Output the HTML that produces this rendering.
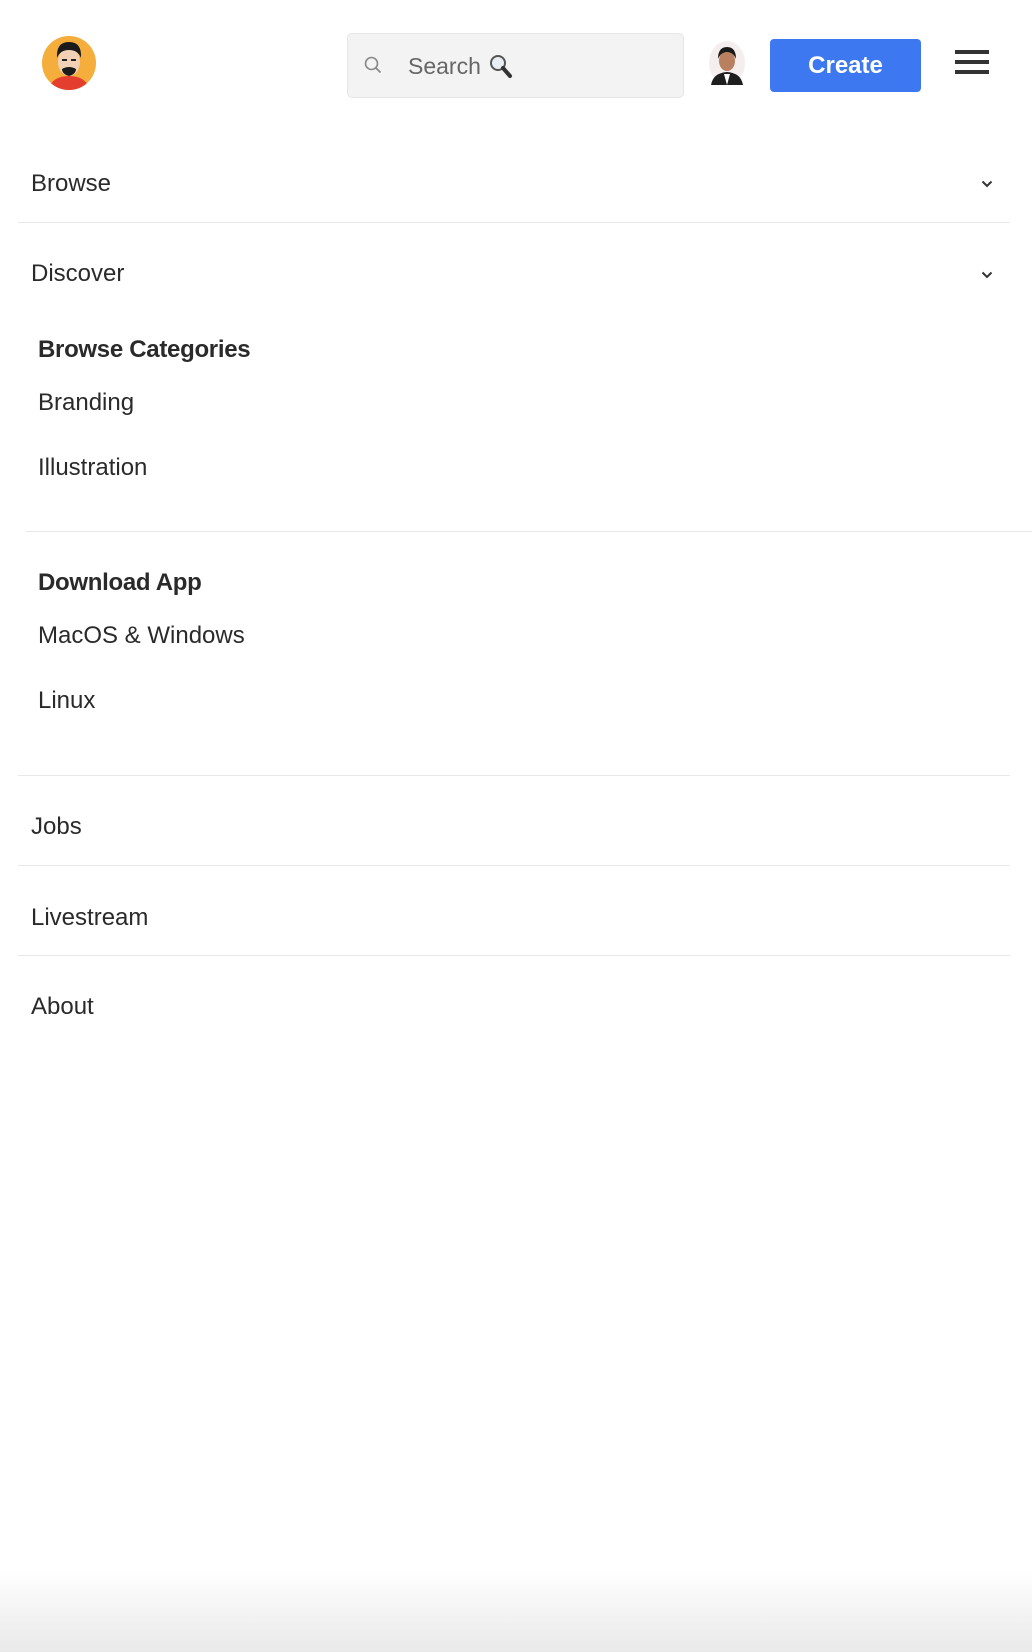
<!DOCTYPE html>
<html><head><meta charset="utf-8"><style>
*{margin:0;padding:0;box-sizing:border-box}
html,body{width:1032px;height:1652px;overflow:hidden;background:#fff}
body{position:relative;font-family:"Liberation Sans",sans-serif;color:#2a2a2a}
.t{position:absolute;font-size:24px;line-height:24px;white-space:nowrap}
.b{font-weight:bold;letter-spacing:-0.3px}
.hr{position:absolute;height:1px;background:#e8e8e8}
.chev{position:absolute;width:12px;height:8px}
</style></head><body>
<svg style="position:absolute;left:42px;top:36px" width="54" height="54" viewBox="0 0 54 54">
<defs><clipPath id="c1"><circle cx="27" cy="27" r="27"/></clipPath></defs>
<g clip-path="url(#c1)">
<rect width="54" height="54" fill="#f5ad3c"/>
<path d="M6 54 Q10 40 27 40 Q44 40 48 54Z" fill="#e33e2e"/>
<ellipse cx="27" cy="26" rx="11" ry="14" fill="#f1d2b6"/>
<path d="M15 22 Q14 6 27 6 Q40 6 39 22 Q36 14 27 14 Q18 14 15 22Z" fill="#1b1b1b"/>
<path d="M20 33 Q27 29 34 33 Q34 38 27 40 Q20 38 20 33Z" fill="#1b1b1b"/>
<rect x="20" y="23" width="5" height="2" fill="#222"/><rect x="29" y="23" width="5" height="2" fill="#222"/>
</g></svg>
<div style="position:absolute;left:347px;top:33px;width:337px;height:65px;background:#f3f3f3;border:1px solid #e6e6e6;border-radius:5px"></div>
<svg style="position:absolute;left:364px;top:56px" width="18" height="18" viewBox="0 0 18 18"><circle cx="7.5" cy="7.5" r="6" fill="none" stroke="#888" stroke-width="1.6"/><path d="M12 12 L16.5 16.5" stroke="#888" stroke-width="1.8"/></svg>
<div class="t" style="left:408px;top:54px;color:#666;font-size:23px">Search</div>
<svg style="position:absolute;left:489px;top:54px" width="24" height="26" viewBox="0 0 24 26"><circle cx="9" cy="9" r="7" fill="#e8eef3" stroke="#555" stroke-width="2"/><path d="M14 14 L21 22" stroke="#333" stroke-width="4" stroke-linecap="round"/></svg>
<svg style="position:absolute;left:708px;top:41px" width="38" height="44" viewBox="0 0 38 44">
<ellipse cx="19" cy="22" rx="18" ry="22" fill="#f5eeee"/>
<path d="M3 44 Q5 32 19 31 Q33 32 35 44Z" fill="#1e1e1e"/>
<path d="M16 33 L19 44 L22 33Z" fill="#fff"/>
<ellipse cx="19" cy="20" rx="8" ry="10" fill="#b98060"/>
<path d="M10 18 Q10 6 19 6 Q28 6 28 18 Q25 11 19 11 Q13 11 10 18Z" fill="#1a1a1a"/>
</svg>
<div style="position:absolute;left:770px;top:39px;width:151px;height:53px;background:#3e78f0;border-radius:4px;color:#fff;font-size:24px;font-weight:bold;text-align:center;line-height:53px">Create</div>
<div style="position:absolute;left:955px;top:50px;width:34px;height:4px;background:#333"></div>
<div style="position:absolute;left:955px;top:60px;width:34px;height:4px;background:#333"></div>
<div style="position:absolute;left:955px;top:70px;width:34px;height:4px;background:#333"></div>

<div class="t" style="left:31px;top:172px">Browse</div>
<svg class="chev" style="left:981px;top:180px" viewBox="0 0 12 8"><path d="M1.5 1.5 L6 6 L10.5 1.5" fill="none" stroke="#333" stroke-width="2"/></svg>
<div class="hr" style="left:18px;top:222px;width:992px"></div>
<div class="t" style="left:31px;top:262px">Discover</div>
<svg class="chev" style="left:981px;top:271px" viewBox="0 0 12 8"><path d="M1.5 1.5 L6 6 L10.5 1.5" fill="none" stroke="#333" stroke-width="2"/></svg>

<div class="t b" style="left:38px;top:338px">Browse Categories</div>
<div class="t" style="left:38px;top:391px">Branding</div>
<div class="t" style="left:38px;top:456px">Illustration</div>
<div class="hr" style="left:26px;top:531px;width:1006px"></div>
<div class="t b" style="left:38px;top:571px">Download App</div>
<div class="t" style="left:38px;top:624px">MacOS &amp; Windows</div>
<div class="t" style="left:38px;top:689px">Linux</div>

<div class="hr" style="left:18px;top:775px;width:992px"></div>
<div class="t" style="left:31px;top:815px">Jobs</div>
<div class="hr" style="left:18px;top:865px;width:992px"></div>
<div class="t" style="left:31px;top:906px">Livestream</div>
<div class="hr" style="left:18px;top:955px;width:992px"></div>
<div class="t" style="left:31px;top:995px">About</div>

<div style="position:absolute;left:0;top:1570px;width:1032px;height:82px;background:radial-gradient(ellipse 160px 80px at 1032px 1652px,#fff 20%,rgba(255,255,255,0) 100%),linear-gradient(#fff,#e9e9e9)"></div>
</body></html>
